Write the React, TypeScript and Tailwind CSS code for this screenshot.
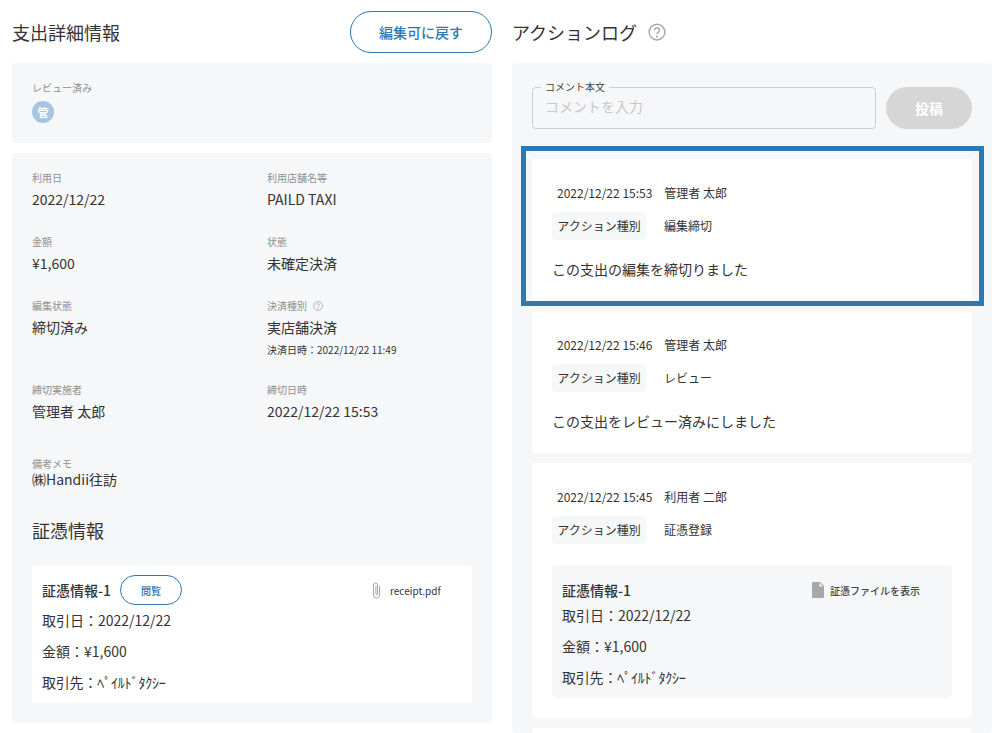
const font = { fontFamily: '"Noto Sans CJK JP", "Noto Sans", sans-serif' }

const HelpIcon = ({ size, color = "#a8a8a8" }: { size: number; color?: string }) => (
  <svg width={size} height={size} viewBox="0 0 24 24" fill="none" stroke={color} strokeWidth="2">
    <circle cx="12" cy="12" r="10.5" />
    <path d="M8.8 9.5a3.2 3.2 0 1 1 5 2.6c-1.2.8-1.8 1.4-1.8 2.9" />
    <circle cx="12" cy="18.2" r="0.5" fill={color} />
  </svg>
)

const Field = ({ label, value, help, sub }: { label: string; value: string; help?: boolean; sub?: string }) => (
  <div className="h-[64px]">
    <div className="flex h-[18px] items-center gap-1.5 text-[10px] leading-[18px] text-[#8f8f8f]">
      {label}
      {help && <HelpIcon size={10} />}
    </div>
    <div className="mt-[2px] text-sm leading-5 text-[#333]">{value}</div>
    {sub && <div className="mt-[5px] text-[10px] leading-4 text-[#333]">{sub}</div>}
  </div>
)

const LogHead = ({ date, user, action }: { date: string; user: string; action: string }) => (
  <>
    <div className="ml-[5px] flex gap-3 text-xs leading-5 text-[#333]">
      <span>{date}</span>
      <span>{user}</span>
    </div>
    <div className="mt-[9px] flex items-center text-xs text-[#333]">
      <span className="flex h-[28px] w-[94px] items-center justify-center rounded bg-[#f6f7f9]">アクション種別</span>
      <span className="ml-[18px]">{action}</span>
    </div>
  </>
)

const LogCard = ({ date, user, action, text }: { date: string; user: string; action: string; text: string }) => (
  <div className="h-[142px] rounded bg-white px-5 pt-6">
    <LogHead date={date} user={user} action={action} />
    <p className="mt-[19px] text-sm leading-5 text-[#333]">{text}</p>
  </div>
)

const ReceiptRows = () => (
  <div className="text-sm leading-[31px] text-[#333]">
    <div>取引日：2022/12/22</div>
    <div>金額：¥1,600</div>
    <div className="tracking-[-0.2px]">取引先：ﾍﾟｲﾙﾄﾞﾀｸｼｰ</div>
  </div>
)

export default function App() {
  return (
    <div className="flex h-[733px] gap-5 overflow-hidden bg-white pl-3 pr-[14px]" style={font}>
      <section className="w-[480px] shrink-0">
        <div className="flex h-[63px] items-center justify-between">
          <h2 className="text-lg font-normal text-[#333]">支出詳細情報</h2>
          <button className="h-[42px] w-[142px] rounded-full border border-[#2d78b4] text-sm font-medium text-[#2d78b4]">
            編集可に戻す
          </button>
        </div>
        <div className="h-[80px] rounded bg-[#f6f7f9] px-5 pt-[17px]">
          <div className="text-[10px] leading-4 text-[#8f8f8f]">レビュー済み</div>
          <div className="mt-[5px] flex h-[22px] w-[22px] items-center justify-center rounded-full bg-[#a9c4e0] text-[11px] font-bold text-white">
            管
          </div>
        </div>
        <div className="mt-[10px] h-[570px] rounded bg-[#f6f7f9] px-5 pt-4">
          <div className="grid grid-cols-[235px_1fr]">
            <Field label="利用日" value="2022/12/22" />
            <Field label="利用店舗名等" value="PAILD TAXI" />
            <Field label="金額" value="¥1,600" />
            <Field label="状態" value="未確定決済" />
            <Field label="編集状態" value="締切済み" />
            <div className="h-[84px]">
              <Field label="決済種別" value="実店舗決済" help sub="決済日時：2022/12/22 11:49" />
            </div>
            <Field label="締切実施者" value="管理者 太郎" />
            <Field label="締切日時" value="2022/12/22 15:53" />
          </div>
          <div className="mt-[14px] text-[10px] leading-[10px] text-[#8f8f8f]">備考メモ</div>
          <div className="text-sm leading-5 text-[#333]">㈱Handii往訪</div>
          <h3 className="mt-[27px] text-lg font-normal leading-7 text-[#333]">証憑情報</h3>
          <div className="mt-[21px] h-[138px] rounded bg-white px-[10px] pt-[10px]">
            <div className="flex h-[30px] items-center">
              <span className="text-sm font-medium text-[#333]">証憑情報-1</span>
              <button className="ml-[9px] h-[30px] w-[62px] rounded-full border border-[#2d78b4] text-[10px] font-medium text-[#2d78b4]">
                閲覧
              </button>
              <svg className="ml-[190px]" width="9" height="17" viewBox="0 0 9 17" fill="none" stroke="#a8a8a8" strokeWidth="1">
                <path d="M7.5 4v9a3 3 0 0 1-6 0V3a2 2 0 0 1 4 0v9a.8.8 0 0 1-1.6 0V4" />
              </svg>
              <span className="ml-[9px] text-[10px] text-[#333]">receipt.pdf</span>
            </div>
            <ReceiptRows />
          </div>
        </div>
      </section>

      <section className="w-[480px] shrink-0">
        <div className="flex h-[63px] items-center gap-[11px]">
          <h2 className="text-lg font-normal text-[#333]">アクションログ</h2>
          <div className="mt-px">
            <HelpIcon size={18} />
          </div>
        </div>
        <div className="h-[670px] rounded bg-[#f6f7f9] px-5 pt-6">
          <div className="flex items-center gap-[10px]">
            <div className="relative h-[42px] w-[344px] rounded border border-[#cfcfcf] px-3 text-sm leading-[37px] text-[#c8c8c8]">
              <span className="absolute -top-[7px] left-2 bg-[#f6f7f9] px-1 text-[10px] leading-3 text-[#444]">コメント本文</span>
              コメントを入力
            </div>
            <button className="h-[42px] w-[86px] rounded-full bg-[#d6d6d6] text-sm font-bold text-white">投稿</button>
          </div>
          <div className="relative mt-[30px] flex flex-col gap-[10px]">
            <div className="pointer-events-none absolute -left-[11px] -right-[12px] -top-[13px] z-10 h-[160px] border-[5px] border-[#2b79b5]" />
            <LogCard date="2022/12/22 15:53" user="管理者 太郎" action="編集締切" text="この支出の編集を締切りました" />
            <LogCard date="2022/12/22 15:46" user="管理者 太郎" action="レビュー" text="この支出をレビュー済みにしました" />
            <div className="h-[255px] rounded bg-white px-5 pt-6">
              <LogHead date="2022/12/22 15:45" user="利用者 二郎" action="証憑登録" />
              <div className="mt-[21px] h-[133px] rounded bg-[#f6f7f9] px-[10px] pt-[15px]">
                <div className="flex h-5 items-center justify-between pr-[22px]">
                  <span className="text-sm font-medium text-[#333]">証憑情報-1</span>
                  <span className="flex items-center gap-[6px] text-[10px] font-medium text-[#444]">
                    <svg width="12" height="16" viewBox="0 0 12 16" fill="#a8a8a8">
                      <path d="M1 0h7l4 4v11a1 1 0 0 1-1 1H1a1 1 0 0 1-1-1V1a1 1 0 0 1 1-1zM7.5 1v3.5H11z" fillRule="evenodd" />
                    </svg>
                    証憑ファイルを表示
                  </span>
                </div>
                <ReceiptRows />
              </div>
            </div>
            <div className="h-10 rounded bg-white" />
          </div>
        </div>
      </section>
    </div>
  )
}
